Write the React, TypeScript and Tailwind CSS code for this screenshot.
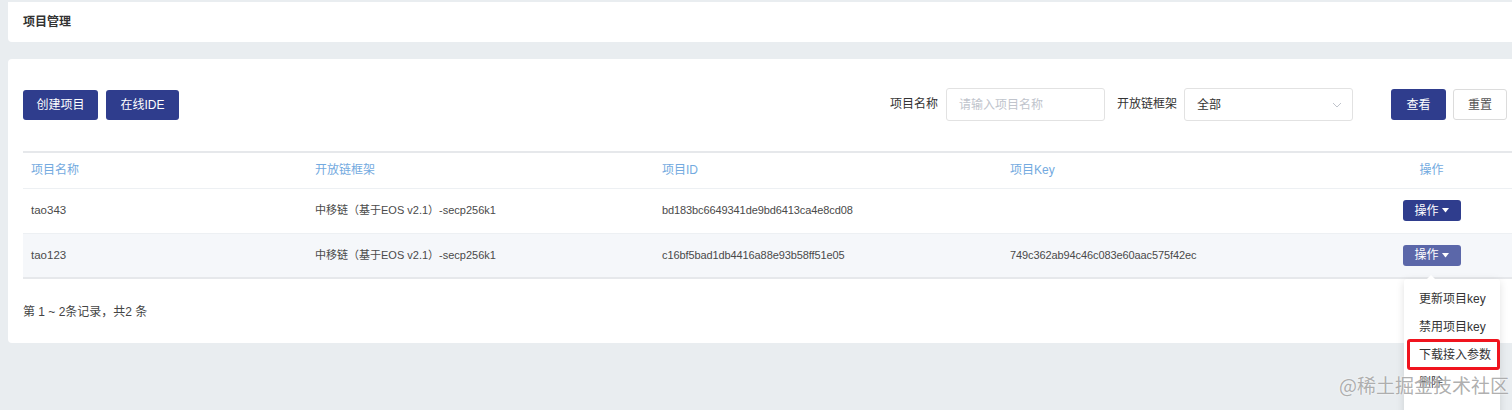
import React from "react";

const font = { fontFamily: '"Liberation Sans", "Noto Sans CJK SC", sans-serif' };

type Row = { name: string; chain: string; id: string; key: string; active?: boolean };

const rows: Row[] = [
  { name: "tao343", chain: "中移链（基于EOS v2.1）-secp256k1", id: "bd183bc6649341de9bd6413ca4e8cd08", key: "" },
  {
    name: "tao123",
    chain: "中移链（基于EOS v2.1）-secp256k1",
    id: "c16bf5bad1db4416a88e93b58ff51e05",
    key: "749c362ab94c46c083e60aac575f42ec",
    active: true,
  },
];

function OpButton({ active }: { active?: boolean }) {
  return (
    <button
      className={`inline-flex h-[21px] w-[58px] items-center justify-center gap-[3px] rounded-[3px] text-[12px] text-white ${
        active ? "bg-[#5b67a9]" : "bg-[#2f3d8d]"
      }`}
    >
      操作
      <svg width="7" height="5" viewBox="0 0 7 5">
        <path d="M0 0h7L3.5 4.5z" fill="currentColor" />
      </svg>
    </button>
  );
}

export default function App() {
  return (
    <div className="relative h-[410px] w-[1512px] overflow-hidden bg-[#e9edf0] text-[12px] text-[#444]" style={font}>
      <div className="ml-2 mt-[2px] flex h-[40px] w-[1530px] items-center rounded-b-[4px] bg-white px-[15px]">
        <span className="text-[12px] font-semibold text-[#333]">项目管理</span>
      </div>

      <div className="ml-2 mt-[17px] h-[284px] w-[1530px] rounded-[4px] bg-white px-[15px] pt-[29px]">
        <div className="flex h-[33px] items-center pr-[16px]">
          <div className="flex gap-2">
            <button className="h-[30px] w-[75px] rounded-[3px] bg-[#2f3d8d] text-[12px] text-white">创建项目</button>
            <button className="h-[30px] w-[73px] rounded-[3px] bg-[#2f3d8d] text-[12px] text-white">在线IDE</button>
          </div>
          <div className="ml-auto mr-[7px] flex items-center">
            <span className="mr-[8px] self-start pt-[7px] text-[#333]">项目名称</span>
            <div className="flex h-[33px] w-[159px] items-center rounded-[3px] border border-[#e2e2e2] px-3 text-[#c0c4cc]">
              请输入项目名称
            </div>
            <span className="ml-[12px] mr-[7px] self-start pt-[7px] text-[#333]">开放链框架</span>
            <div className="flex h-[33px] w-[169px] items-center justify-between rounded-[3px] border border-[#e2e2e2] pl-3 pr-[10px] text-[#333]">
              全部
              <svg width="10" height="6" viewBox="0 0 10 6">
                <path d="M1 1l4 4 4-4" fill="none" stroke="#c0c4cc" strokeWidth="1" />
              </svg>
            </div>
            <button className="ml-[38px] h-[31px] w-[55px] rounded-[3px] bg-[#2f3d8d] text-[12px] text-white">查看</button>
          </div>
          <button className="h-[31px] w-[54px] rounded-[3px] border border-[#dcdcdc] bg-white text-[12px] text-[#555]">
            重置
          </button>
        </div>

        <table className="mt-[30px] w-[1490px] table-fixed border-collapse border-y-2 border-[#e6e8eb]">
          <colgroup>
            <col className="w-[284px]" />
            <col className="w-[347px]" />
            <col className="w-[348px]" />
            <col className="w-[348px]" />
            <col className="w-[163px]" />
          </colgroup>
          <thead>
            <tr className="h-[36px] border-b border-[#edf0f3] text-left text-[#73aae0]">
              <th className="px-2 font-normal">项目名称</th>
              <th className="px-2 font-normal">开放链框架</th>
              <th className="px-2 font-normal">项目ID</th>
              <th className="px-2 font-normal">项目Key</th>
              <th className="px-2 text-center font-normal">操作</th>
            </tr>
          </thead>
          <tbody className="text-[11px] text-[#4a4a4a]">
            {rows.map((r) => (
              <tr key={r.name} className={`h-[45px] border-b border-[#edf0f3] ${r.active ? "bg-[#f5f7fa]" : "bg-white"}`}>
                <td className="px-2 text-[11.5px]">{r.name}</td>
                <td className="px-2">{r.chain}</td>
                <td className="px-2 tracking-[-0.1px]">{r.id}</td>
                <td className="px-2 tracking-[-0.1px]">{r.key}</td>
                <td className="px-2 text-center">
                  <OpButton active={r.active} />
                </td>
              </tr>
            ))}
          </tbody>
        </table>

        <div className="mt-[24px] text-[#444]">第 1 ~ 2条记录，共2 条</div>
      </div>

      {/* dropdown for the second row */}
      <div className="absolute left-[1404px] top-[279px] w-[96px] rounded-[3px] bg-white pt-[6px] shadow-[0_2px_8px_rgba(0,0,0,0.12)]">
        <div className="absolute -top-[4px] left-[22px] h-0 w-0 border-x-[5px] border-b-[5px] border-x-transparent border-b-white" />
        {["更新项目key", "禁用项目key", "下载接入参数", "删除"].map((t) => (
          <div key={t} className="flex h-[28px] items-center pl-[15px] text-[#333]">
            {t}
          </div>
        ))}
        <div className="h-[20px]" />
      </div>
      <div className="absolute left-[1407px] top-[339px] h-[31px] w-[93px] rounded-[3px] border-[3px] border-[#f0141e]" />

      <div
        className="pointer-events-none absolute left-[1339px] top-[371px] text-[19px] text-[#9a9a9a]/80"
        style={{ fontFamily: '"Noto Sans CJK SC", sans-serif', textShadow: "0 0 2px #fff" }}
      >
        @稀土掘金技术社区
      </div>
    </div>
  );
}
